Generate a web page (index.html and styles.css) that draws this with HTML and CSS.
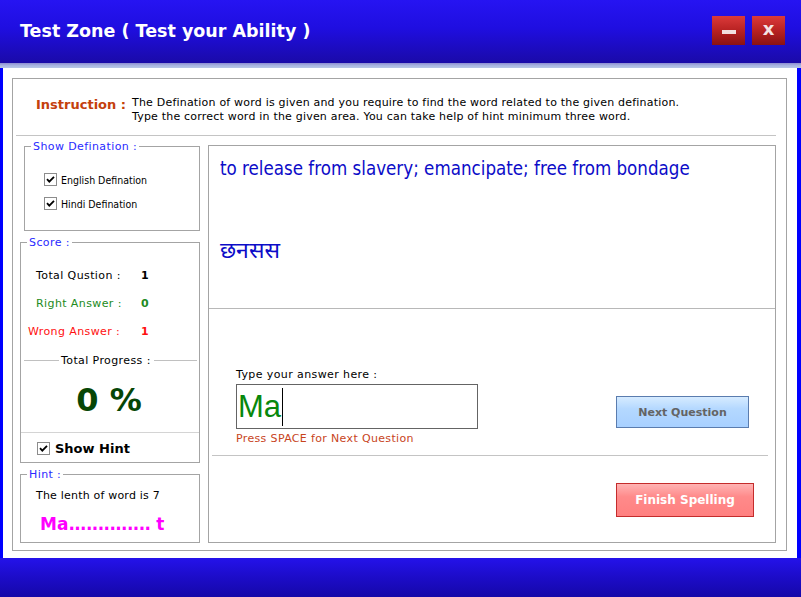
FILE: index.html
```html
<!DOCTYPE html>
<html>
<head>
<meta charset="utf-8">
<link rel="stylesheet" href="styles.css">
</head>
<body>
<div class="window">
  <div class="titlebar">
    <div class="title">Test Zone ( Test your Ability )</div>
    <div class="tbtns">
      <div class="tbtn"><span class="minbar"></span></div>
      <div class="tbtn"><span class="xglyph">x</span></div>
    </div>
  </div>
  <div class="band"></div>
  <div class="main">
    <div class="lstrip"></div>
    <div class="content">
      <div class="panel">
        <div class="instr">
          <div class="instr-label">Instruction :</div>
          <div class="instr-text">The Defination of word is given and you require to find the word related to the given defination.<br>Type the correct word in the given area. You can take help of hint minimum three word.</div>
        </div>
        <div class="body">
          <div class="leftcol">
            <div class="group gdef">
              <span class="gtitle">Show Defination :</span>
              <div class="chk-row"><svg class="chk" width="13" height="13" viewBox="0 0 13 13"><rect x="0.5" y="0.5" width="12" height="12" fill="#fff" stroke="#8c8c8c"/><path d="M3 6.2 L5.3 8.6 L10 3.8" fill="none" stroke="#000" stroke-width="1.8"/></svg><span>English Defination</span></div>
              <div class="chk-row"><svg class="chk" width="13" height="13" viewBox="0 0 13 13"><rect x="0.5" y="0.5" width="12" height="12" fill="#fff" stroke="#8c8c8c"/><path d="M3 6.2 L5.3 8.6 L10 3.8" fill="none" stroke="#000" stroke-width="1.8"/></svg><span>Hindi Defination</span></div>
            </div>
            <div class="group gscore">
              <span class="gtitle">Score :</span>
              <div class="srow total"><span class="slabel">Total Qustion :</span><span class="sval">1</span></div>
              <div class="srow right"><span class="slabel">Right Answer :</span><span class="sval">0</span></div>
              <div class="srow wrong"><span class="slabel">Wrong Answer :</span><span class="sval">1</span></div>
              <div class="progress-head"><span class="pline"></span><span class="ptext">Total Progress :</span><span class="pline"></span></div>
              <div class="percent">0 %</div>
              <div class="hintrow"><svg class="chk" width="13" height="13" viewBox="0 0 13 13"><rect x="0.5" y="0.5" width="12" height="12" fill="#fff" stroke="#8c8c8c"/><path d="M3 6.2 L5.3 8.6 L10 3.8" fill="none" stroke="#000" stroke-width="1.8"/></svg><span>Show Hint</span></div>
            </div>
            <div class="group ghint">
              <span class="gtitle">Hint :</span>
              <div class="hint-len">The lenth of word is 7</div>
              <div class="hint-word">Ma<span class="dots">..............</span> t</div>
            </div>
          </div>
          <div class="rightpanel">
            <div class="defarea">
              <div class="def-en">to release from slavery; emancipate; free from bondage</div>
              <div class="def-hi">छनसस</div>
            </div>
            <div class="answerarea">
              <div class="answer-row">
                <div class="answer-block">
                  <div class="answer-label">Type your answer here :</div>
                  <div class="answer-input"><span class="typed">Ma</span><span class="caret"></span></div>
                  <div class="answer-note">Press SPACE for Next Question</div>
                </div>
                <div class="btn btn-next">Next Question</div>
              </div>
              <div class="sep"></div>
              <div class="btn btn-finish">Finish Spelling</div>
            </div>
          </div>
        </div>
      </div>
    </div>
    <div class="rstrip"></div>
  </div>
  <div class="footer"></div>
</div>
</body>
</html>
```
FILE: styles.css
```css
html, body {
  margin: 0;
  padding: 0;
  background: #ffffff;
}
.window {
  width: 801px;
  height: 597px;
  display: flex;
  flex-direction: column;
  overflow: hidden;
  font-family: "DejaVu Sans", sans-serif;
  font-size: 11px;
  letter-spacing: 0.4px;
  color: #000;
}
.titlebar {
  height: 63px;
  flex: none;
  background: linear-gradient(#2614f2, #1f0ee0 45%, #1a0aa8);
  display: flex;
  align-items: flex-start;
  justify-content: space-between;
  letter-spacing: 0;
}
.title {
  margin: 19px 0 0 20px;
  color: #fff;
  font-family: "DejaVu Sans", sans-serif;
  font-weight: bold;
  font-size: 17.5px;
  line-height: 24px;
}
.tbtns {
  display: flex;
  gap: 7px;
  margin: 16px 16px 0 0;
}
.tbtn {
  width: 33px;
  height: 29px;
  background: linear-gradient(#dc3a3a, #b82222 50%, #8a1212);
  display: flex;
  align-items: center;
  justify-content: center;
}
.minbar {
  width: 14px;
  height: 4px;
  background: #f2e0e0;
  margin-top: 3px;
}
.xglyph {
  color: #f4e4e4;
  font-family: "DejaVu Sans", sans-serif;
  font-weight: bold;
  font-size: 18px;
  line-height: 18px;
  margin-top: -3px;
}
.band {
  height: 5px;
  flex: none;
  background: linear-gradient(#8c8cd2, #a8b4e0 50%, #b8c8e8);
}
.main {
  flex: 1;
  display: flex;
  min-height: 0;
}
.lstrip {
  width: 3px;
  background: #0000ff;
}
.rstrip {
  width: 4px;
  background: #0000ff;
}
.content {
  flex: 1;
  background: #fff;
  display: flex;
  flex-direction: column;
}
.footer {
  height: 39px;
  flex: none;
  background: linear-gradient(#2412ea, #1c0cc8 50%, #1508a8);
}
.panel {
  flex: 1;
  margin: 10px 10px 7px 9px;
  border: 1px solid #a4a4a4;
  display: flex;
  flex-direction: column;
}
.instr {
  margin: 0 10px 0 3px;
  border-bottom: 1px solid #c4c4c4;
  display: flex;
  align-items: flex-start;
  padding-top: 16px;
  box-sizing: content-box;
  height: 40px;
}
.instr-label {
  margin-left: 20px;
  width: 96px;
  flex: none;
  color: #c4400c;
  font-family: "DejaVu Sans", sans-serif;
  font-weight: bold;
  font-size: 13px;
  line-height: 17px;
  margin-top: 1px;
  letter-spacing: 0;
}
.instr-text {
  line-height: 14px;
  margin-top: 1px;
  letter-spacing: 0.2px;
}
.body {
  flex: 1;
  display: flex;
  padding-left: 7px;
}
.leftcol {
  width: 180px;
  display: flex;
  flex-direction: column;
}
.group {
  position: relative;
  border: 1px solid #a4a4a4;
  box-sizing: border-box;
}
.gtitle {
  position: absolute;
  top: -7px;
  left: 6px;
  padding: 0 2px;
  background: #fff;
  color: #2a2aff;
  line-height: 14px;
}
.gdef {
  margin: 10px 0 0 4px;
  height: 85px;
  padding: 26px 0 0 19px;
}
.chk-row {
  display: flex;
  align-items: center;
  height: 13px;
  margin-bottom: 11px;
  font-family: "DejaVu Sans Condensed", "DejaVu Sans", sans-serif;
  font-size: 10.5px;
  letter-spacing: 0;
}
.chk {
  flex: none;
  display: block;
}
.chk-row span {
  margin-left: 4px;
}
.gscore {
  margin-top: 11px;
  height: 221px;
  padding-top: 26px;
}
.srow {
  display: flex;
  height: 14px;
  line-height: 14px;
  margin-bottom: 14px;
}
.slabel {
  width: 120px;
  padding-left: 15px;
  box-sizing: border-box;
}
.sval {
  font-weight: bold;
  font-family: "DejaVu Sans", sans-serif;
}
.right {
  color: #228b22;
}
.wrong {
  color: #ff1010;
}
.wrong .slabel {
  padding-left: 7px;
}
.progress-head {
  display: flex;
  align-items: center;
  margin: 3px 2px 0 3px;
  height: 14px;
}
.pline {
  flex: 1;
  height: 1px;
  background: #c0c0c0;
}
.ptext {
  padding: 0 3px 0 2px;
}
.pline:first-child {
  flex: 0 0 35px;
}
.percent {
  text-align: center;
  color: #064606;
  font-family: "DejaVu Sans", sans-serif;
  font-weight: bold;
  font-size: 32px;
  line-height: 38px;
  margin-top: 14px;
  height: 42px;
  padding-right: 2px;
  letter-spacing: 0;
}
.hintrow {
  border-top: 1px solid #d4d4d4;
  margin-top: 9px;
  height: 30px;
  display: flex;
  align-items: center;
  padding-left: 16px;
  padding-top: 1px;
  box-sizing: border-box;
}
.hintrow span {
  margin-left: 5px;
  font-family: "DejaVu Sans", sans-serif;
  font-weight: bold;
  font-size: 13px;
  letter-spacing: 0;
}
.ghint {
  margin-top: 11px;
  height: 69px;
  padding: 14px 0 0 15px;
}
.hint-len {
  line-height: 14px;
  letter-spacing: 0.2px;
}
.hint-word {
  margin: 10px 0 0 4px;
  color: #ff00ff;
  font-family: "DejaVu Sans", sans-serif;
  font-weight: bold;
  font-size: 17px;
  line-height: 22px;
  letter-spacing: 0;
}
.dots {
  letter-spacing: -0.6px;
}
.rightpanel {
  width: 568px;
  height: 398px;
  margin: 9px 0 0 8px;
  border: 1px solid #a4a4a4;
  box-sizing: border-box;
  display: flex;
  flex-direction: column;
}
.defarea {
  height: 163px;
  flex: none;
  box-sizing: border-box;
  border-bottom: 1px solid #b8b8b8;
  padding: 12px 0 0 11px;
  color: #0c0cc8;
  letter-spacing: 0;
}
.def-en {
  font-family: "DejaVu Sans Condensed", "DejaVu Sans", sans-serif;
  font-size: 18.6px;
  line-height: 22px;
}
.def-hi {
  margin-top: 57px;
  font-family: "Noto Sans Devanagari", "Lohit Devanagari", "FreeSans", sans-serif;
  font-size: 23px;
  line-height: 30px;
}
.answerarea {
  flex: 1;
  display: flex;
  flex-direction: column;
}
.answer-row {
  display: flex;
  padding: 59px 0 0 27px;
}
.answer-block {
  width: 242px;
}
.answer-label {
  line-height: 14px;
  height: 16px;
}
.answer-input {
  height: 45px;
  border: 1px solid #646464;
  box-sizing: border-box;
  display: flex;
  align-items: center;
  padding-left: 1px;
  letter-spacing: 0;
}
.typed {
  color: #08880c;
  font-family: "Liberation Sans", sans-serif;
  font-size: 31px;
  line-height: 36px;
}
.caret {
  width: 1px;
  height: 38px;
  background: #000;
  margin-left: 1px;
}
.answer-note {
  margin-top: 3px;
  line-height: 14px;
  color: #c8441c;
  letter-spacing: 0.35px;
}
.btn {
  display: flex;
  align-items: center;
  justify-content: center;
  box-sizing: border-box;
  font-family: "DejaVu Sans", sans-serif;
  font-weight: bold;
  font-size: 11px;
  letter-spacing: 0;
}
.btn-next {
  width: 133px;
  height: 32px;
  margin: 28px 0 0 138px;
  border: 1px solid #5a7cae;
  background: linear-gradient(#d6ebff, #b4d8ff 40%, #a8d0ff);
  color: #646464;
}
.sep {
  height: 1px;
  background: #c4c4c4;
  margin: 9px 7px 0 3px;
}
.btn-finish {
  width: 138px;
  height: 34px;
  margin: 27px 0 0 407px;
  border: 1px solid #c42c2c;
  background: linear-gradient(#ffb4b4, #ff8a8a 40%, #ff8080);
  color: #fff;
  font-size: 12px;
}
```
